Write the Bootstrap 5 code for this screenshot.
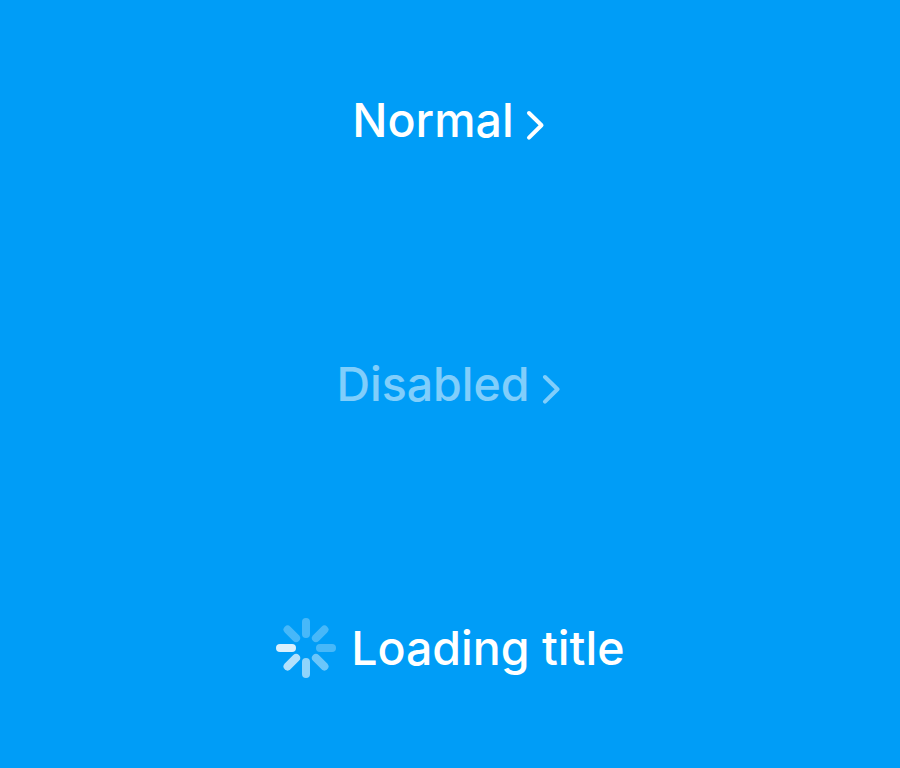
<!DOCTYPE html>
<html lang="en"><head><meta charset="utf-8"><meta name="viewport" content="width=device-width, initial-scale=1"><title>Buttons</title>
<link href="https://cdn.jsdelivr.net/npm/bootstrap@5.3.0/dist/css/bootstrap.min.css" rel="stylesheet">
<style>
body{background:#009df7;font-family:Inter,"Liberation Sans",sans-serif}
.title-btn,.title-btn:disabled{--bs-btn-padding-x:0;--bs-btn-padding-y:0;--bs-btn-color:#fff;--bs-btn-disabled-color:#fff;--bs-btn-disabled-opacity:.5;--bs-btn-font-size:46.5px;font-weight:450;line-height:60px;letter-spacing:0}
.board{height:768px;padding-top:90px}
.state-row{height:264px}
.chevron{width:20px;height:32px;margin:10px 3px 0 11px}
.spinner{width:60px;height:60px;margin-right:15.6px}
</style></head><body>
<main class="board d-flex flex-column overflow-hidden">
<div class="state-row flex-shrink-0 d-flex justify-content-center align-items-start"><button class="title-btn btn border-0 d-flex align-items-center"><span>Normal</span><svg class="chevron" viewBox="0 0 20 32" fill="none" stroke="currentColor" stroke-width="4" stroke-linecap="round" stroke-linejoin="round"><path d="M4 4l12.5 12.3L4 28.6"/></svg></button></div>
<div class="state-row flex-shrink-0 d-flex justify-content-center align-items-start"><button class="title-btn btn border-0 d-flex align-items-center" disabled><span>Disabled</span><svg class="chevron" viewBox="0 0 20 32" fill="none" stroke="currentColor" stroke-width="4" stroke-linecap="round" stroke-linejoin="round"><path d="M4 4l12.5 12.3L4 28.6"/></svg></button></div>
<div class="state-row flex-shrink-0 d-flex justify-content-center align-items-start"><button class="title-btn btn border-0 d-flex align-items-center"><svg class="spinner" viewBox="-30 -30 60 60" stroke="#fff" stroke-width="8" stroke-linecap="round"><path d="M0-26V-14" opacity=".28"/><path d="M18.4-18.4L9.9-9.9" opacity=".28"/><path d="M26 0H14" opacity=".28"/><path d="M18.4 18.4L9.9 9.9" opacity=".42"/><path d="M0 26V14" opacity=".56"/><path d="M-18.4 18.4L-9.9 9.9" opacity=".7"/><path d="M-26 0H-14" opacity=".85"/><path d="M-18.4-18.4L-9.9-9.9" opacity=".28"/></svg><span>Loading title</span></button></div>
</main>
<script src="https://cdn.jsdelivr.net/npm/bootstrap@5.3.0/dist/js/bootstrap.bundle.min.js"></script>
</body></html>
